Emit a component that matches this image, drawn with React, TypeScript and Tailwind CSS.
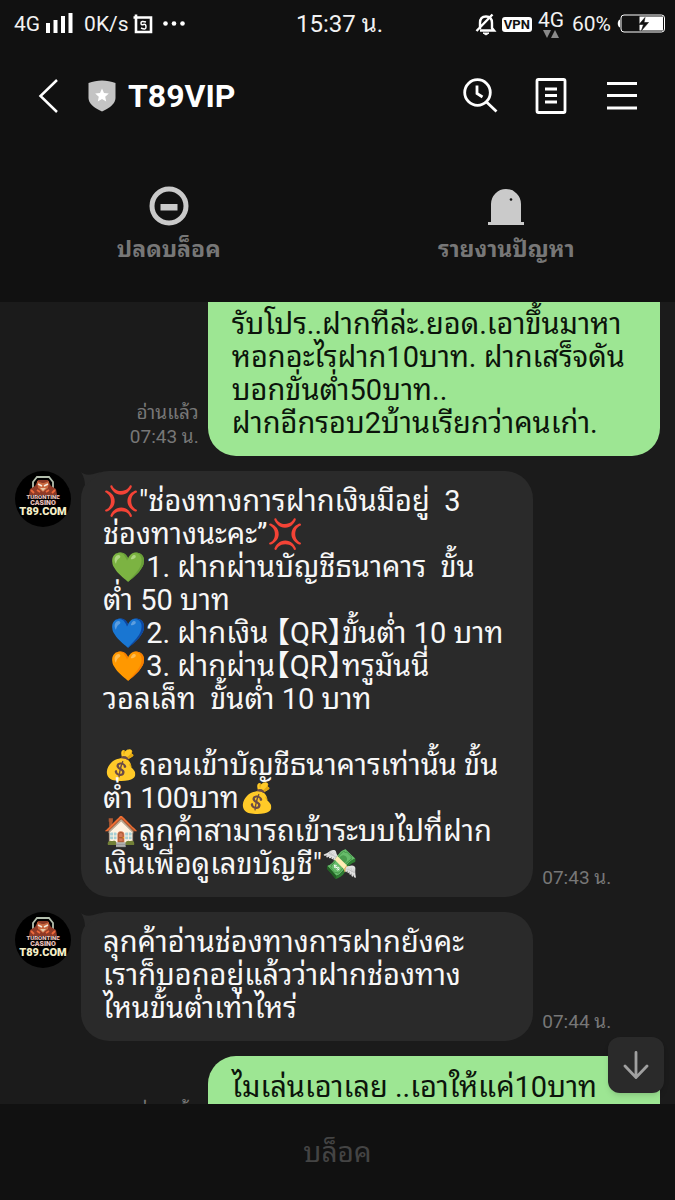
import { ReactNode } from 'react';

type Message = {
  id: number;
  mine: boolean;
  lines: string[];
  time: string;
  continued?: boolean;
};

const messages: Message[] = [
  {
    id: 1,
    mine: true,
    continued: true,
    time: '07:43 น.',
    lines: [
      'รับโปร..ฝากทีล่ะ.ยอด.เอาขึ้นมาหา',
      'หอกอะไรฝาก10บาท. ฝากเสร็จดัน',
      'บอกขั่นต่ำ50บาท..',
      'ฝากอีกรอบ2บ้านเรียกว่าคนเก่า.',
    ],
  },
  {
    id: 2,
    mine: false,
    time: '07:43 น.',
    lines: [
      '💢"ช่องทางการฝากเงินมีอยู่  3',
      'ช่องทางนะคะ”💢',
      ' 💚1. ฝากผ่านบัญชีธนาคาร  ขั้น',
      'ต่ำ 50 บาท',
      ' 💙2. ฝากเงิน 【QR】ขั้นต่ำ 10 บาท',
      ' 🧡3. ฝากผ่าน【QR】ทรูมันนี่',
      'วอลเล็ท  ขั้นต่ำ 10 บาท',
      '',
      '💰ถอนเข้าบัญชีธนาคารเท่านั้น ขั้น',
      'ต่ำ 100บาท💰',
      '🏠ลูกค้าสามารถเข้าระบบไปที่ฝาก',
      'เงินเพื่อดูเลขบัญชี"💸',
    ],
  },
  {
    id: 3,
    mine: false,
    time: '07:44 น.',
    lines: ['ลุกค้าอ่านช่องทางการฝากยังคะ', 'เราก็บอกอยู่แล้วว่าฝากช่องทาง', 'ไหนขั้นต่ำเท่าไหร่'],
  },
  {
    id: 4,
    mine: true,
    time: '07:44 น.',
    lines: ['ไมเล่นเอาเลย ..เอาให้แค่10บาท', ''],
  },
];

function StatusBar() {
  return (
    <div className="flex h-12 items-center justify-between pl-[14px] pr-[10px] text-[21px] leading-6 text-[#f2f2f2]">
      <div className="flex flex-1 items-center">
        <span>4G</span>
        <svg className="ml-1.5 h-6 w-7" viewBox="0 0 28 24" fill="#fff" aria-hidden="true">
          <path d="M0 11h4v10H0zM7.500 8h4v13h-4zM15 4h4v17h-4zM22.500 1h4v20h-4z" />
        </svg>
        <span className="ml-2.5">0K/s</span>
        <svg className="ml-1 size-5" viewBox="0 0 20 20" fill="none" aria-hidden="true">
          <path d="M.5 3.500h17.500v14.500H3V.5" stroke="#fff" strokeWidth="2.600" />
          <path d="M13 8q-5-1.500-5 1t2.500 1.500T13 13t-5 1" stroke="#fff" strokeWidth="1.500" />
        </svg>
        <svg className="ml-2.5 h-5 w-6" viewBox="0 0 24 20" fill="#fff" aria-hidden="true">
          <circle cx="2.500" cy="9.500" r="2.300" />
          <circle cx="11" cy="9.500" r="2.300" />
          <circle cx="19.500" cy="9.500" r="2.300" />
        </svg>
      </div>
      <span className="text-[24px]">15:37 น.</span>
      <div className="flex flex-1 items-center justify-end">
        <svg className="size-6" viewBox="0 0 24 24" fill="none" stroke="#fff" strokeWidth="2.400" aria-hidden="true">
          <path d="M6 17v-6c0-4 2-6.500 6-6.500s6 2.500 6 6.500v5l2 2.500H6M2.500 19 18.500 2.500" />
          <path d="M9 21h6l-3 2z" fill="#fff" strokeWidth="1" />
        </svg>
        <span className="ml-1 rounded-[3px] bg-white px-[2px] text-[13px] font-bold leading-[15px] text-[#111]">VPN</span>
        <span className="ml-1.5 flex flex-col items-center">
          <span className="leading-5">4G</span>
          <svg className="h-2 w-4" viewBox="0 0 16 8" fill="#8a8a8a" aria-hidden="true">
            <path d="M0 0h8L4 8zM8 8h8l-4-8z" />
          </svg>
        </span>
        <span className="ml-2">60%</span>
        <svg className="ml-1.5 h-5 w-12" viewBox="0 0 48 20" aria-hidden="true">
          <path d="M3 5.500C0 6.500 0 12.500 3 13.500z" fill="#fff" />
          <rect x="4" y="1" width="43.500" height="17" rx="3" fill="none" stroke="#fff" strokeWidth="1" />
          <path d="M22.500 2.500H46v14H22.500z" fill="#fff" />
          <path d="M28 3.500 22 10.500h4.500l-2 6 7-8H27z" fill="#111" stroke="#111" strokeWidth=".6" />
        </svg>
      </div>
    </div>
  );
}

function IconButton({ label, children }: { label: string; children: ReactNode }) {
  return (
    <button type="button" aria-label={label} className="flex size-9 items-center justify-center">
      {children}
    </button>
  );
}

function TitleBar() {
  return (
    <div className="flex h-24 items-center pl-[30px] pr-[35px]">
      <IconButton label="Back">
        <svg className="size-9" viewBox="0 0 36 36" fill="none" stroke="#fff" strokeWidth="2.500">
          <path d="M27 2 10.500 18 27 34" />
        </svg>
      </IconButton>
      <svg className="ml-[22px] h-8 w-7" viewBox="0 0 28 32" aria-hidden="true">
        <path d="M.5 3C9-.5 19-.5 27.500 3v15c0 5-5 10-13.500 13.500C5.500 28 .5 23 .5 18z" fill="#c4c4c4" />
        <path d="m14 8.500 2 4.500 4.800.5-3.600 3.200 1 4.800-4.200-2.500-4.200 2.500 1-4.800-3.600-3.200 4.800-.5z" fill="#fff" />
      </svg>
      <h1 className="ml-3 flex-1 text-[32px] font-bold leading-10 text-white">T89VIP</h1>
      <div className="flex items-center gap-[35px]">
        <IconButton label="Search">
          <svg className="size-9" viewBox="0 0 36 36" fill="none" stroke="#fff" strokeWidth="2.800">
            <circle cx="15.500" cy="14.500" r="12.800" />
            <path d="M15 7.500v8l5.500 3.500M24.500 24 34.500 33.500" />
          </svg>
        </IconButton>
        <IconButton label="Notes">
          <svg className="size-9" viewBox="0 0 36 36" fill="none" stroke="#fff" strokeWidth="2.800">
            <rect x="4" y="1.500" width="28" height="33" rx="1.500" />
            <path d="M12 11h12M12 17.500h12M12 24h12" />
          </svg>
        </IconButton>
        <IconButton label="Menu">
          <svg className="size-9" viewBox="0 0 36 36" fill="none" stroke="#fff" strokeWidth="2.800">
            <path d="M3 5.500h30M3 17.500h30M3 30h30" />
          </svg>
        </IconButton>
      </div>
    </div>
  );
}

function QuickActions() {
  return (
    <div className="grid grid-cols-2 pb-[38px] pt-[42px] text-[23px] font-bold leading-7 text-[#777]">
      <button type="button" className="flex flex-col items-center gap-2.5">
        <svg className="size-10" viewBox="0 0 40 40" aria-hidden="true">
          <circle cx="20" cy="20" r="17" fill="none" stroke="#cacaca" strokeWidth="5" />
          <path d="M11.500 18h17v6.500h-17z" fill="#cacaca" />
        </svg>
        ปลดบล็อค
      </button>
      <button type="button" className="flex flex-col items-center gap-2.5">
        <svg className="size-10" viewBox="0 0 40 40" aria-hidden="true">
          <path d="M5 18a15 15 0 0 1 30 0v18h3v3H2v-3h3z" fill="#cacaca" />
          <circle cx="25" cy="13.500" r="1.300" fill="#111" />
        </svg>
        รายงานปัญหา
      </button>
    </div>
  );
}

function Avatar() {
  return (
    <svg className="size-14 shrink-0" viewBox="0 0 56 56" role="img" aria-label="T89.COM">
      <circle cx="28" cy="28" r="28" fill="#000" />
      <path d="M18 17v-6l4-5h12l4 5v6" fill="none" stroke="#b4bfae" strokeWidth="1.800" />
      <path d="m14 24 1-6 5-3 3-6h10l3 6 5 3 1 6z" fill="#8f3a26" />
      <path d="m22 10 5 2h2l5-2-1 7-5 4-5-4z" fill="#c9683f" />
      <path d="m23 13 4 2m6-2-4 2" stroke="#f5e9dc" strokeWidth="1.500" />
      <path d="m16 19 3 3m21-3-3 3M22 19l3 2m9-2-3 2" fill="none" stroke="#ee6a3c" strokeWidth="1.800" />
      <path d="M25 17h6l-3 3z" fill="#e8c7a5" />
      <text x="28" y="28" textAnchor="middle" fontSize="6" fontWeight="900" fill="#f0dfd8" stroke="#a8483d" strokeWidth=".2">TURONTINE</text>
      <text x="28" y="34" textAnchor="middle" fontSize="7" fontWeight="900" fill="#f0dfd8" stroke="#a8483d" strokeWidth=".2">CASINO</text>
      <text x="28" y="44" textAnchor="middle" fontSize="11" fontWeight="900" fill="#f5efc8">T89.COM</text>
    </svg>
  );
}

function MessageText({ lines }: { lines: string[] }) {
  return (
    <>
      {lines.map((line, i) => (
        <p key={i} className="h-[33px] whitespace-pre [font-feature-settings:'halt']">{line}</p>
      ))}
    </>
  );
}

function SentMessage({ message }: { message: Message }) {
  return (
    <div className="flex items-end justify-end gap-[9px] pr-[15px]">
      <div className="pb-[7px] text-right text-[19px] leading-6 text-[#777]">
        <p>อ่านแล้ว</p>
        <p>{message.time}</p>
      </div>
      <div
        className={
          message.continued
            ? 'w-[67vw] rounded-b-[28px] bg-[#9de693] px-6 pb-4 pt-[6px] text-[#0c140b]'
            : 'w-[67vw] rounded-l-[28px] rounded-br-[28px] bg-[#9de693] px-6 pb-4 pt-[15px] text-[#0c140b]'
        }
      >
        <MessageText lines={message.lines} />
      </div>
    </div>
  );
}

function ReceivedMessage({ message }: { message: Message }) {
  return (
    <div className="flex items-start pl-[15px]">
      <Avatar />
      <div className="relative ml-2.5 w-[67vw] rounded-[28px] bg-[#2a2a2a] px-[22px] pb-4 pt-[14px] text-[#f7f7f7]">
        <svg className="absolute left-0 top-0 h-4 w-5" viewBox="0 0 20 16" fill="#2a2a2a" aria-hidden="true">
          <path d="M0 1c5 4 9 3 20 0L4 15C4 10 3 6 0 1z" />
        </svg>
        <MessageText lines={message.lines} />
      </div>
      <p className="ml-[9px] self-end pb-[7px] text-[19px] leading-6 text-[#777]">{message.time}</p>
    </div>
  );
}

export default function App() {
  return (
    <div className="flex h-screen flex-col overflow-hidden bg-[#111] font-['Roboto','Noto_Sans_Thai_Looped','Loma','Noto_Sans_CJK_JP',sans-serif]">
      <header>
        <StatusBar />
        <TitleBar />
        <QuickActions />
      </header>
      <main className="relative min-h-0 flex-1 overflow-hidden bg-[#1b1b1b]">
        <div className="flex flex-col gap-[15px] text-[29px] leading-[33px]">
          {messages.map((m) => (m.mine ? <SentMessage key={m.id} message={m} /> : <ReceivedMessage key={m.id} message={m} />))}
        </div>
        <button
          type="button"
          aria-label="Scroll to latest"
          className="absolute bottom-[11px] right-[11px] flex size-14 items-center justify-center rounded-xl bg-[#2a2a2a] shadow-md"
        >
          <svg className="size-7" viewBox="0 0 28 28" fill="none" stroke="#a0a0a0" strokeWidth="2.800" strokeLinecap="round">
            <path d="M14 1.500V26M3 15l11 11.500L25 15" />
          </svg>
        </button>
      </main>
      <footer className="flex h-24 shrink-0 items-center justify-center">
        <button type="button" disabled className="text-[28px] leading-[33px] text-[#444]">บล็อค</button>
      </footer>
    </div>
  );
}
